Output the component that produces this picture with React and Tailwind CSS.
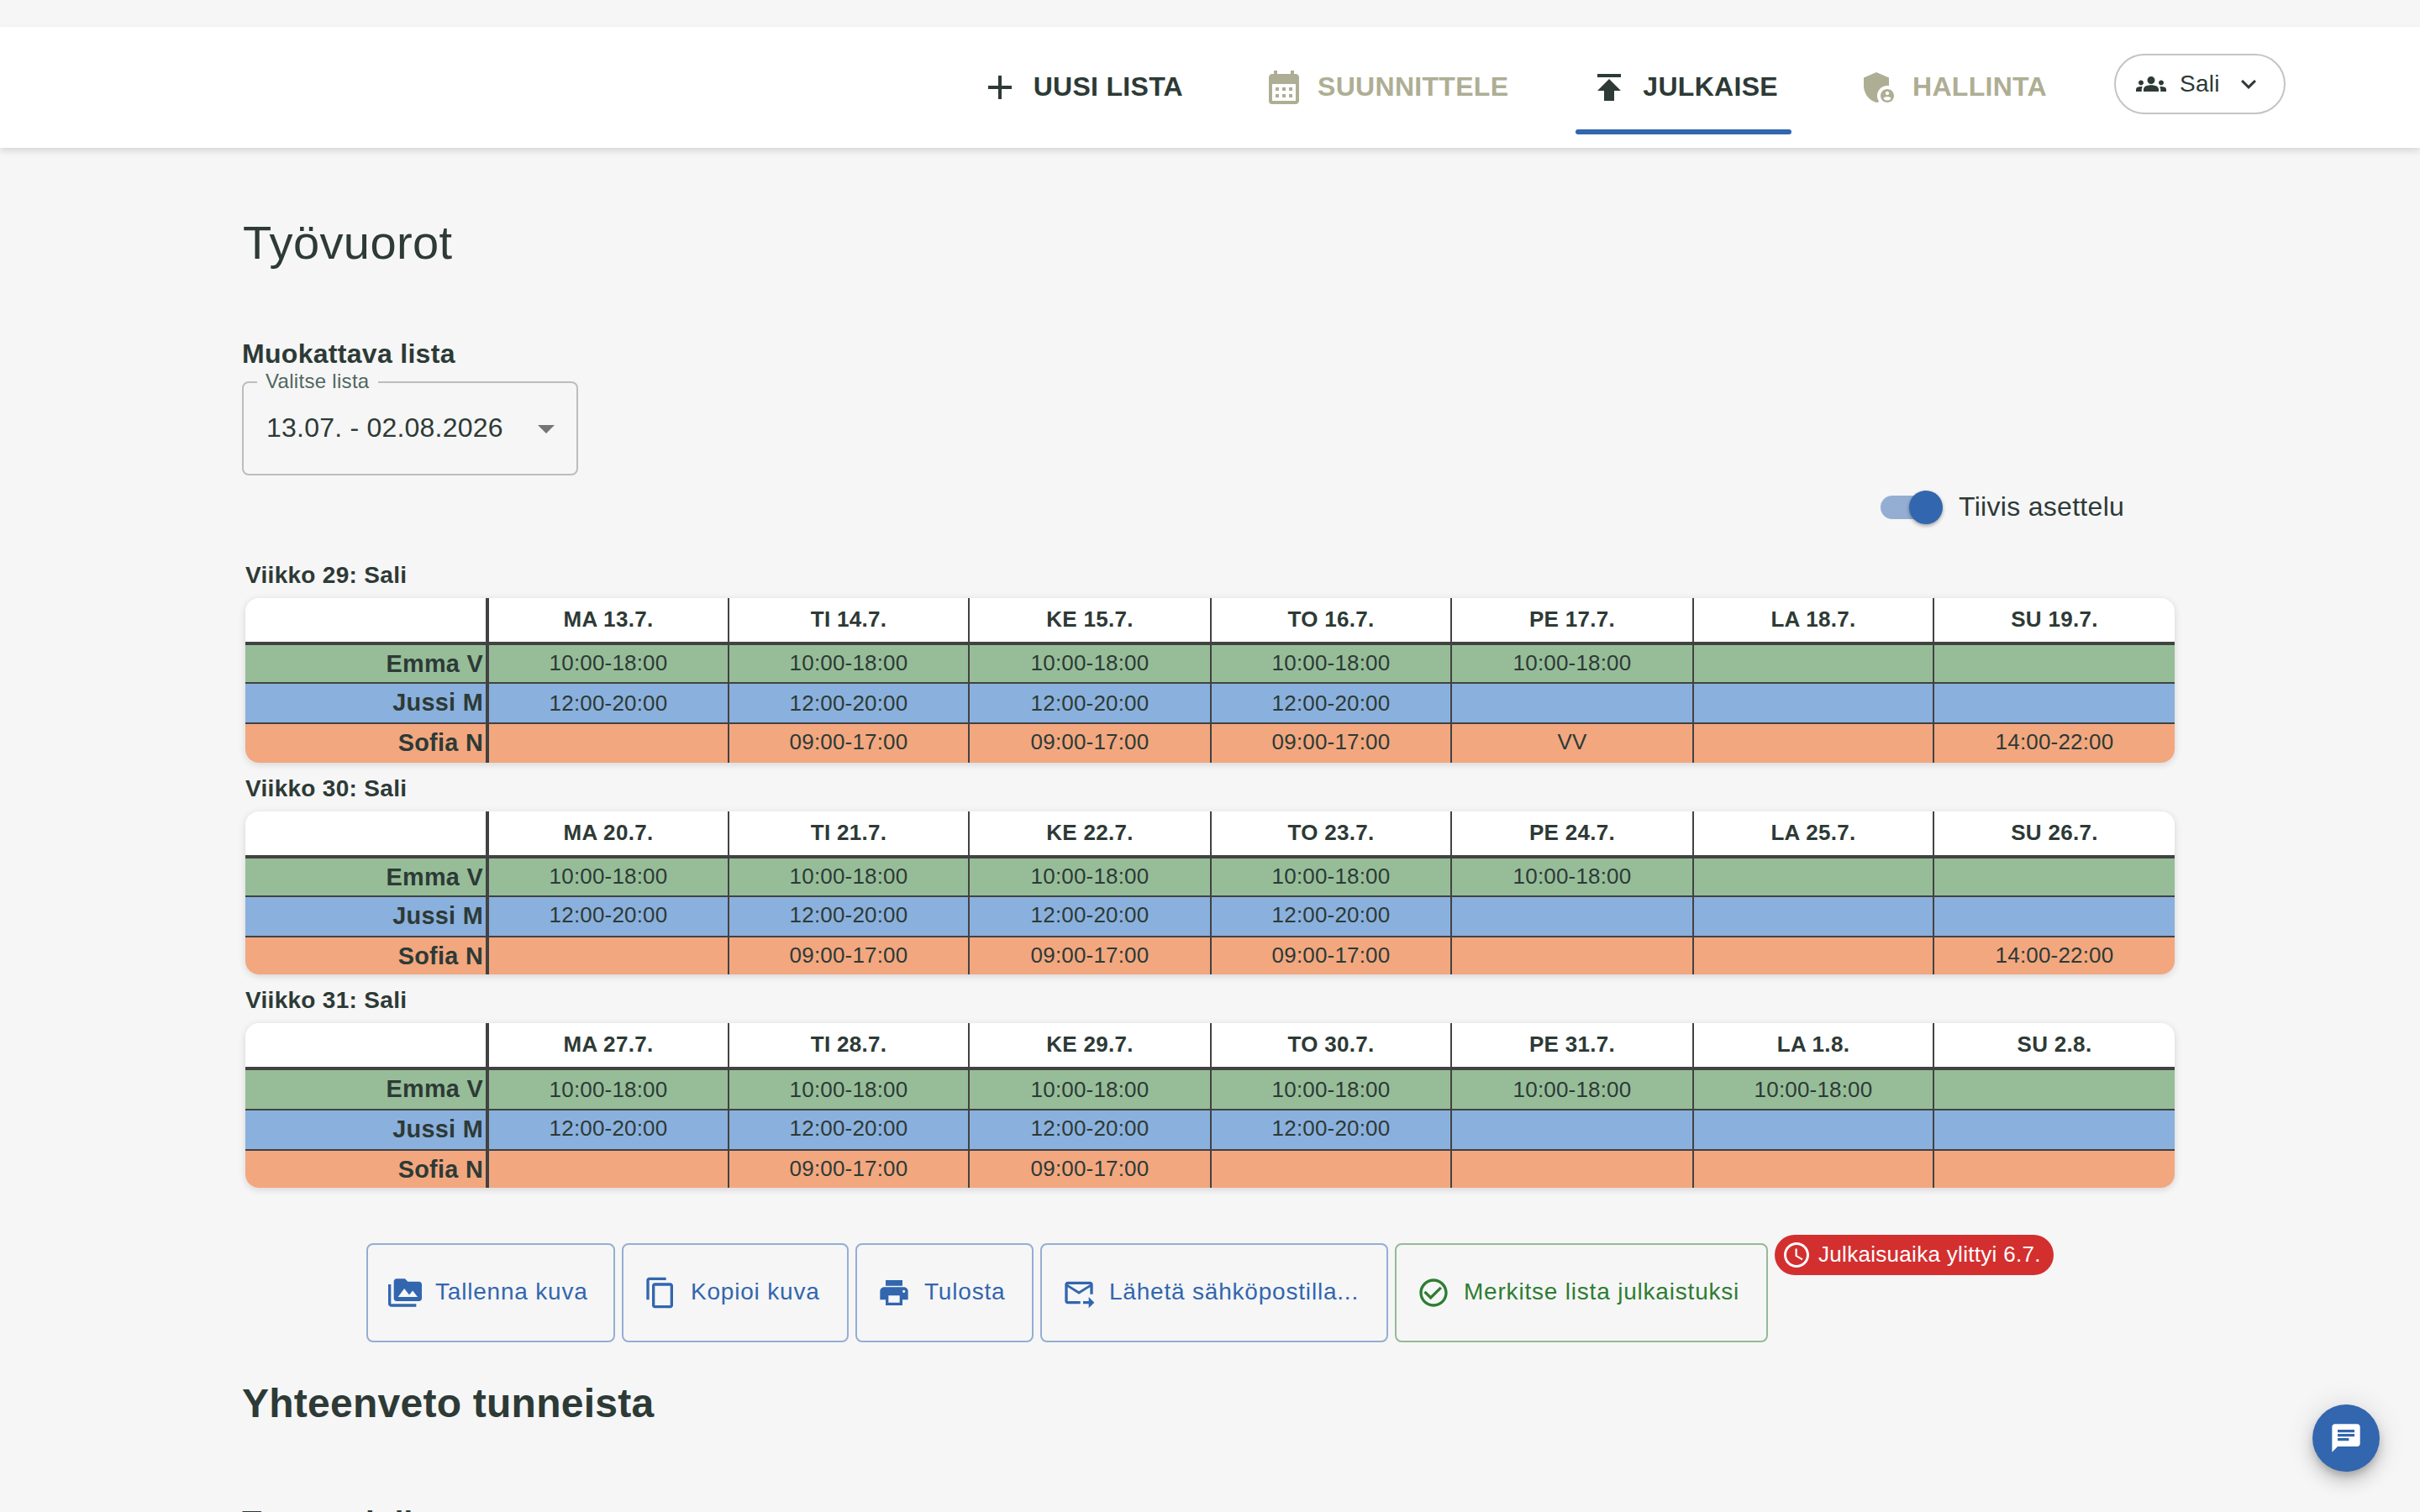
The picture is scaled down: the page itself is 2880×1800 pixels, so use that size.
import React, { useState } from 'react';
import {
  MdAccessTime,
  MdAdd,
  MdAdminPanelSettings,
  MdArrowDropDown,
  MdCalendarMonth,
  MdChat,
  MdCheckCircleOutline,
  MdContentCopy,
  MdExpandMore,
  MdForwardToInbox,
  MdGroups,
  MdPermMedia,
  MdPrint,
  MdPublish,
} from 'react-icons/md';
import clsx from 'clsx';

const TABS = [
  { id: 'uusi', label: 'UUSI LISTA', icon: MdAdd },
  { id: 'suunnittele', label: 'SUUNNITTELE', icon: MdCalendarMonth, muted: true },
  { id: 'julkaise', label: 'JULKAISE', icon: MdPublish },
  { id: 'hallinta', label: 'HALLINTA', icon: MdAdminPanelSettings, muted: true },
];

const AAMU = '10:00-18:00';
const ILTA = '12:00-20:00';
const VARHAIN = '09:00-17:00';

const WEEKS = [
  {
    title: 'Viikko 29: Sali',
    days: ['MA 13.7.', 'TI 14.7.', 'KE 15.7.', 'TO 16.7.', 'PE 17.7.', 'LA 18.7.', 'SU 19.7.'],
    rows: [
      { name: 'Emma V', bg: 'bg-[#96bd98]', size: 'h-[46px]', shifts: [AAMU, AAMU, AAMU, AAMU, AAMU, '', ''] },
      { name: 'Jussi M', bg: 'bg-[#8ab0dd]', size: 'h-12', low: true, shifts: [ILTA, ILTA, ILTA, ILTA, '', '', ''] },
      { name: 'Sofia N', bg: 'bg-[#f2a77f]', size: 'h-[46px]', shifts: ['', VARHAIN, VARHAIN, VARHAIN, 'VV', '', '14:00-22:00'] },
    ],
  },
  {
    title: 'Viikko 30: Sali',
    days: ['MA 20.7.', 'TI 21.7.', 'KE 22.7.', 'TO 23.7.', 'PE 24.7.', 'LA 25.7.', 'SU 26.7.'],
    rows: [
      { name: 'Emma V', bg: 'bg-[#96bd98]', size: 'h-[46px]', shifts: [AAMU, AAMU, AAMU, AAMU, AAMU, '', ''] },
      { name: 'Jussi M', bg: 'bg-[#8ab0dd]', size: 'h-12', shifts: [ILTA, ILTA, ILTA, ILTA, '', '', ''] },
      { name: 'Sofia N', bg: 'bg-[#f2a77f]', size: 'h-11', shifts: ['', VARHAIN, VARHAIN, VARHAIN, '', '', '14:00-22:00'] },
    ],
  },
  {
    title: 'Viikko 31: Sali',
    days: ['MA 27.7.', 'TI 28.7.', 'KE 29.7.', 'TO 30.7.', 'PE 31.7.', 'LA 1.8.', 'SU 2.8.'],
    rows: [
      { name: 'Emma V', bg: 'bg-[#96bd98]', size: 'h-12', low: true, shifts: [AAMU, AAMU, AAMU, AAMU, AAMU, AAMU, ''] },
      { name: 'Jussi M', bg: 'bg-[#8ab0dd]', size: 'h-12', shifts: [ILTA, ILTA, ILTA, ILTA, '', '', ''] },
      { name: 'Sofia N', bg: 'bg-[#f2a77f]', size: 'h-11', shifts: ['', VARHAIN, VARHAIN, '', '', '', ''] },
    ],
  },
];

const ACTIONS = [
  { label: 'Tallenna kuva', icon: MdPermMedia, width: 'w-[296px]' },
  { label: 'Kopioi kuva', icon: MdContentCopy, width: 'w-[270px]' },
  { label: 'Tulosta', icon: MdPrint, width: 'w-[212px]' },
  { label: 'Lähetä sähköpostilla...', icon: MdForwardToInbox, width: 'w-[414px]' },
  { label: 'Merkitse lista julkaistuksi', icon: MdCheckCircleOutline, width: 'w-[444px]', success: true },
];

const COLS = 'grid grid-cols-[290px_286px_286px_288px_286px_288px_286px_286px]';

function NavBar({ active, onSelect }) {
  return (
    <header className="mt-8 h-36 bg-white flex justify-end pr-40 gap-16 shadow-[0_4px_8px_rgba(0,0,0,0.12)]">
      {TABS.map(({ id, label, icon: Icon, muted }) => (
        <button
          key={id}
          onClick={() => onSelect(id)}
          className={clsx(
            'relative h-36 px-4 flex items-center gap-4 font-bold text-[32px]',
            muted ? 'text-[#aeae94]' : 'text-[#2d3a36]'
          )}
        >
          <Icon className="size-12 shrink-0" />
          <span className="pb-0.5 leading-[48px] whitespace-nowrap">{label}</span>
          {active === id && <span className="absolute left-0 right-0 bottom-4 h-1.5 rounded-full bg-[#3266af]" />}
        </button>
      ))}
      <button className="mt-8 h-[72px] w-[204px] rounded-full border-2 border-[#c4c4c4] flex items-center pl-6 text-[28px]">
        <MdGroups className="size-9" />
        <span className="ml-4 leading-[40px]">Sali</span>
        <MdExpandMore className="size-9 ml-4" />
      </button>
    </header>
  );
}

function ListSelect() {
  return (
    <div className="relative mt-[9px] w-[400px] h-28 rounded-lg border-2 border-[#bdbdbd] pt-[29px] pl-[27px] pr-3 flex items-start justify-between">
      <span className="absolute left-4 -top-4 px-[10px] bg-[#f6f6f6] text-[24px] leading-[28px] text-[#50665f] whitespace-nowrap">
        Valitse lista
      </span>
      <span className="text-[32px] leading-[48px] tracking-[0.22px]">13.07. - 02.08.2026</span>
      <MdArrowDropDown className="mt-px size-12 text-[#757575]" />
    </div>
  );
}

function DenseSwitch({ checked, onChange }) {
  return (
    <label className="mt-2 ml-[1926px] h-[60px] pl-6 flex items-center">
      <button onClick={onChange} className="relative w-[68px] h-7 rounded-full bg-[#94aed3]">
        <span
          className={clsx(
            'absolute -top-1.5 size-10 rounded-full bg-[#3266af] shadow-[0_2px_4px_rgba(0,0,0,0.35)]',
            checked ? 'left-[34px]' : '-left-1.5'
          )}
        />
      </button>
      <span className="ml-[25px] pb-0.5 text-[32px] leading-[48px]">Tiivis asettelu</span>
    </label>
  );
}

function WeekTable({ week }) {
  return (
    <section className="mt-[11px] ml-1">
      <h3 className="text-[28px] leading-[40px] font-bold">{week.title}</h3>
      <div className="mt-[7px] w-[2296px] rounded-2xl overflow-hidden bg-white shadow-[0_2px_8px_rgba(0,0,0,0.14)]">
        <div className={clsx(COLS, 'h-14 border-b-4 border-[#424242]')}>
          <div className="border-r-4 border-[#424242]" />
          {week.days.map((day, i) => (
            <div
              key={day}
              className={clsx('text-center font-bold text-[26px] leading-[50px]', i < 6 && 'border-r-2 border-[#424242]')}
            >
              {day}
            </div>
          ))}
        </div>
        {week.rows.map((row, r) => (
          <div key={row.name} className={clsx(COLS, row.bg, row.size, r < 2 && 'border-b-2 border-[#424242]')}>
            <div className="border-r-4 border-[#424242] pr-[3px] text-right font-bold text-[28.8px] leading-[44px]">
              {row.name}
            </div>
            {row.shifts.map((shift, i) => (
              <div
                key={i}
                className={clsx(
                  'text-center text-[26px] leading-[42px] tracking-[0.18px]',
                  row.low && 'pt-0.5',
                  i < 6 && 'border-r-2 border-[#424242]'
                )}
              >
                {shift}
              </div>
            ))}
          </div>
        ))}
      </div>
    </section>
  );
}

function Actions() {
  return (
    <div className="mt-[66px] ml-[148px] flex items-start gap-2">
      {ACTIONS.map(({ label, icon: Icon, width, success }) => (
        <button
          key={label}
          className={clsx(
            'h-[118px] rounded-lg border-2 pl-6 flex items-center gap-4 text-[28px] tracking-[0.8px]',
            width,
            success ? 'border-[#93bb95] text-[#2e7d32]' : 'border-[#94aed3] text-[#3266af]'
          )}
        >
          <Icon className="size-10 shrink-0" />
          <span className="pb-0.5 leading-[48px] whitespace-nowrap">{label}</span>
        </button>
      ))}
      <div className="-mt-2.5 h-12 w-[332px] rounded-full bg-[#d32f2f] text-white pl-2 flex items-center gap-2 text-[26px]">
        <MdAccessTime className="size-9" />
        <span className="pb-0.5 leading-[38px] whitespace-nowrap">Julkaisuaika ylittyi 6.7.</span>
      </div>
    </div>
  );
}

export default function App() {
  const [tab, setTab] = useState('julkaise');
  const [dense, setDense] = useState(true);

  return (
    <div className="relative flow-root w-[2880px] h-[1800px] overflow-hidden bg-[#f6f6f6] text-[#2d3a36] tracking-[0.3px] font-['Liberation_Sans',Arial,sans-serif]">
      <NavBar active={tab} onSelect={setTab} />

      <main className="pl-72">
        <h1 className="pt-[78px] pl-px text-[56px] leading-[70px] tracking-[0.4px]">Työvuorot</h1>

        <h2 className="mt-[73px] text-[32px] leading-[48px] font-bold">Muokattava lista</h2>
        <ListSelect />
        <DenseSwitch checked={dense} onChange={() => setDense(!dense)} />

        <div className="pt-5">
          {WEEKS.map((week) => (
            <WeekTable key={week.title} week={week} />
          ))}
        </div>

        <Actions />

        <h2 className="mt-[41px] text-[48px] leading-[64px] font-bold tracking-[0.25px]">Yhteenveto tunneista</h2>
        <h3 className="mt-[86px] text-[38px] leading-[48px] font-bold">Testuunit lista</h3>
      </main>

      <button className="absolute right-12 bottom-12 size-20 rounded-full bg-[#3266af] text-white flex items-center justify-center shadow-[0_6px_10px_-2px_rgba(0,0,0,0.2),0_12px_20px_rgba(0,0,0,0.14),0_2px_36px_rgba(0,0,0,0.12)]">
        <MdChat className="size-10" />
      </button>
    </div>
  );
}
